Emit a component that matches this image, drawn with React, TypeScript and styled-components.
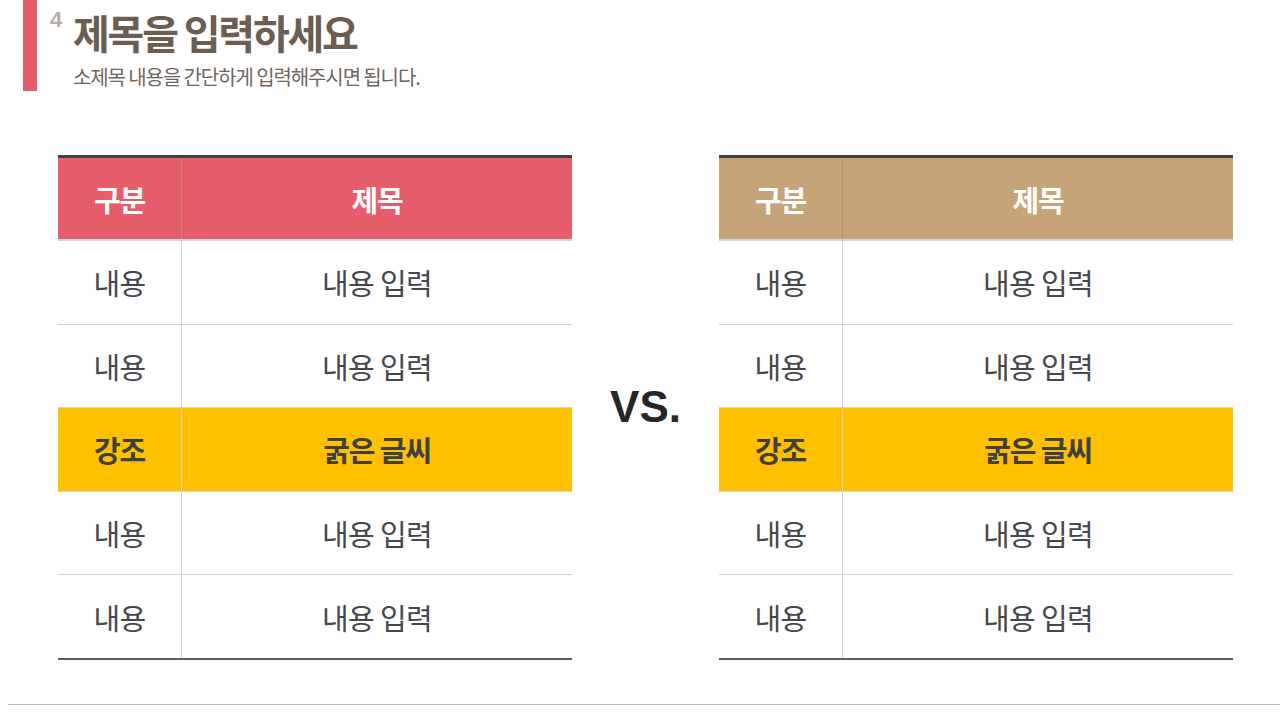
import React from "react";
import styled, { createGlobalStyle } from "styled-components";

const GlobalStyle = createGlobalStyle`
  html, body { margin: 0; padding: 0; background: #ffffff; }
  body { font-family: "Noto Sans CJK KR", "Noto Sans", sans-serif; }
`;

const Page = styled.div`
  width: 1280px;
  height: 720px;
  display: flex;
  flex-direction: column;
  overflow: hidden;
  background: #fff;
`;

const Header = styled.header`
  display: flex;
  align-items: flex-start;
  padding-left: 23px;
  height: 91px;
`;

const AccentBar = styled.div`
  width: 14px;
  height: 91px;
  background: #e65d6c;
`;

const TitleBlock = styled.div`
  display: flex;
  flex-direction: column;
  margin-left: 12px;
`;

const TitleRow = styled.div`
  display: flex;
  align-items: flex-start;
  height: 64px;
`;

const Num = styled.span`
  font-family: "Liberation Sans", Arial, sans-serif;
  font-weight: 700;
  font-size: 22px;
  line-height: 22px;
  color: #b5aba0;
  margin-top: 9px;
  width: 24px;
  padding-left: 1px;
  box-sizing: border-box;
`;

const Title = styled.h1`
  margin: 0;
  margin-top: 7px;
  font-size: 40px;
  line-height: 50px;
  font-weight: 700;
  letter-spacing: -2.2px;
  color: #6b5d50;
`;

const Subtitle = styled.p`
  margin: 0;
  margin-left: 24px;
  margin-top: 0px;
  font-size: 20px;
  line-height: 26px;
  letter-spacing: -1.1px;
  color: #6f655c;
`;

const Content = styled.div`
  display: flex;
  align-items: center;
  padding-left: 58px;
  margin-top: 64px;
`;

const Table = styled.div`
  width: 514px;
  border-top: 3px solid #404142;
  border-bottom: 2px solid #5d5d5f;
  display: flex;
  flex-direction: column;
`;

const Row = styled.div<{ $bg?: string }>`
  display: grid;
  grid-template-columns: 124px 1fr;
  height: 83.6px;
  box-sizing: border-box;
  border-top: 1px solid #d2d2d2;
  background: ${(p) => p.$bg || "transparent"};
`;

const HeadRow = styled(Row)`
  height: 82px;
  border-top: none;
  border-bottom: 1px solid #d8d8d8;
`;

const Cell = styled.div<{ $divider?: string; $bold?: boolean; $color?: string }>`
  display: flex;
  align-items: center;
  justify-content: center;
  font-size: 29px;
  font-weight: ${(p) => (p.$bold ? 700 : 400)};
  letter-spacing: ${(p) => (p.$bold ? "-1.2px" : "-0.6px")};
  color: ${(p) => p.$color || "#45474d"};
  border-right: ${(p) => (p.$divider ? `1px solid ${p.$divider}` : "none")};
`;

const VsBox = styled.div`
  width: 147px;
  display: flex;
  justify-content: center;
  font-family: "Liberation Sans", Arial, sans-serif;
  font-weight: 700;
  font-size: 44px;
  color: #262626;
`;

const BottomLine = styled.div`
  margin-top: auto;
  margin-bottom: 15px;
  margin-left: 8px;
  height: 1px;
  background: #c6b6a6;
`;

type RowData = { a: string; b: string; em?: boolean };

const rows: RowData[] = [
  { a: "내용", b: "내용 입력" },
  { a: "내용", b: "내용 입력" },
  { a: "강조", b: "굵은 글씨", em: true },
  { a: "내용", b: "내용 입력" },
  { a: "내용", b: "내용 입력" },
];

function CompareTable({ head, headDivider }: { head: string; headDivider: string }) {
  return (
    <Table>
      <HeadRow $bg={head}>
        <Cell $bold $color="#ffffff" $divider={headDivider}>구분</Cell>
        <Cell $bold $color="#ffffff">제목</Cell>
      </HeadRow>
      {rows.map((r, i) => (
        <Row key={i} $bg={r.em ? "#ffc000" : undefined}>
          <Cell $bold={r.em} $color={r.em ? "#3f4045" : undefined} $divider="#d2d2d2">
            {r.a}
          </Cell>
          <Cell $bold={r.em} $color={r.em ? "#3f4045" : undefined}>
            {r.b}
          </Cell>
        </Row>
      ))}
    </Table>
  );
}

export default function App() {
  return (
    <>
      <GlobalStyle />
      <Page>
        <Header>
          <AccentBar />
          <TitleBlock>
            <TitleRow>
              <Num>4</Num>
              <Title>제목을 입력하세요</Title>
            </TitleRow>
            <Subtitle>소제목 내용을 간단하게 입력해주시면 됩니다.</Subtitle>
          </TitleBlock>
        </Header>
        <Content>
          <CompareTable head="#e65d6c" headDivider="#c98a78" />
          <VsBox>VS.</VsBox>
          <CompareTable head="#c5a47a" headDivider="#b8915f" />
        </Content>
        <BottomLine />
      </Page>
    </>
  );
}
